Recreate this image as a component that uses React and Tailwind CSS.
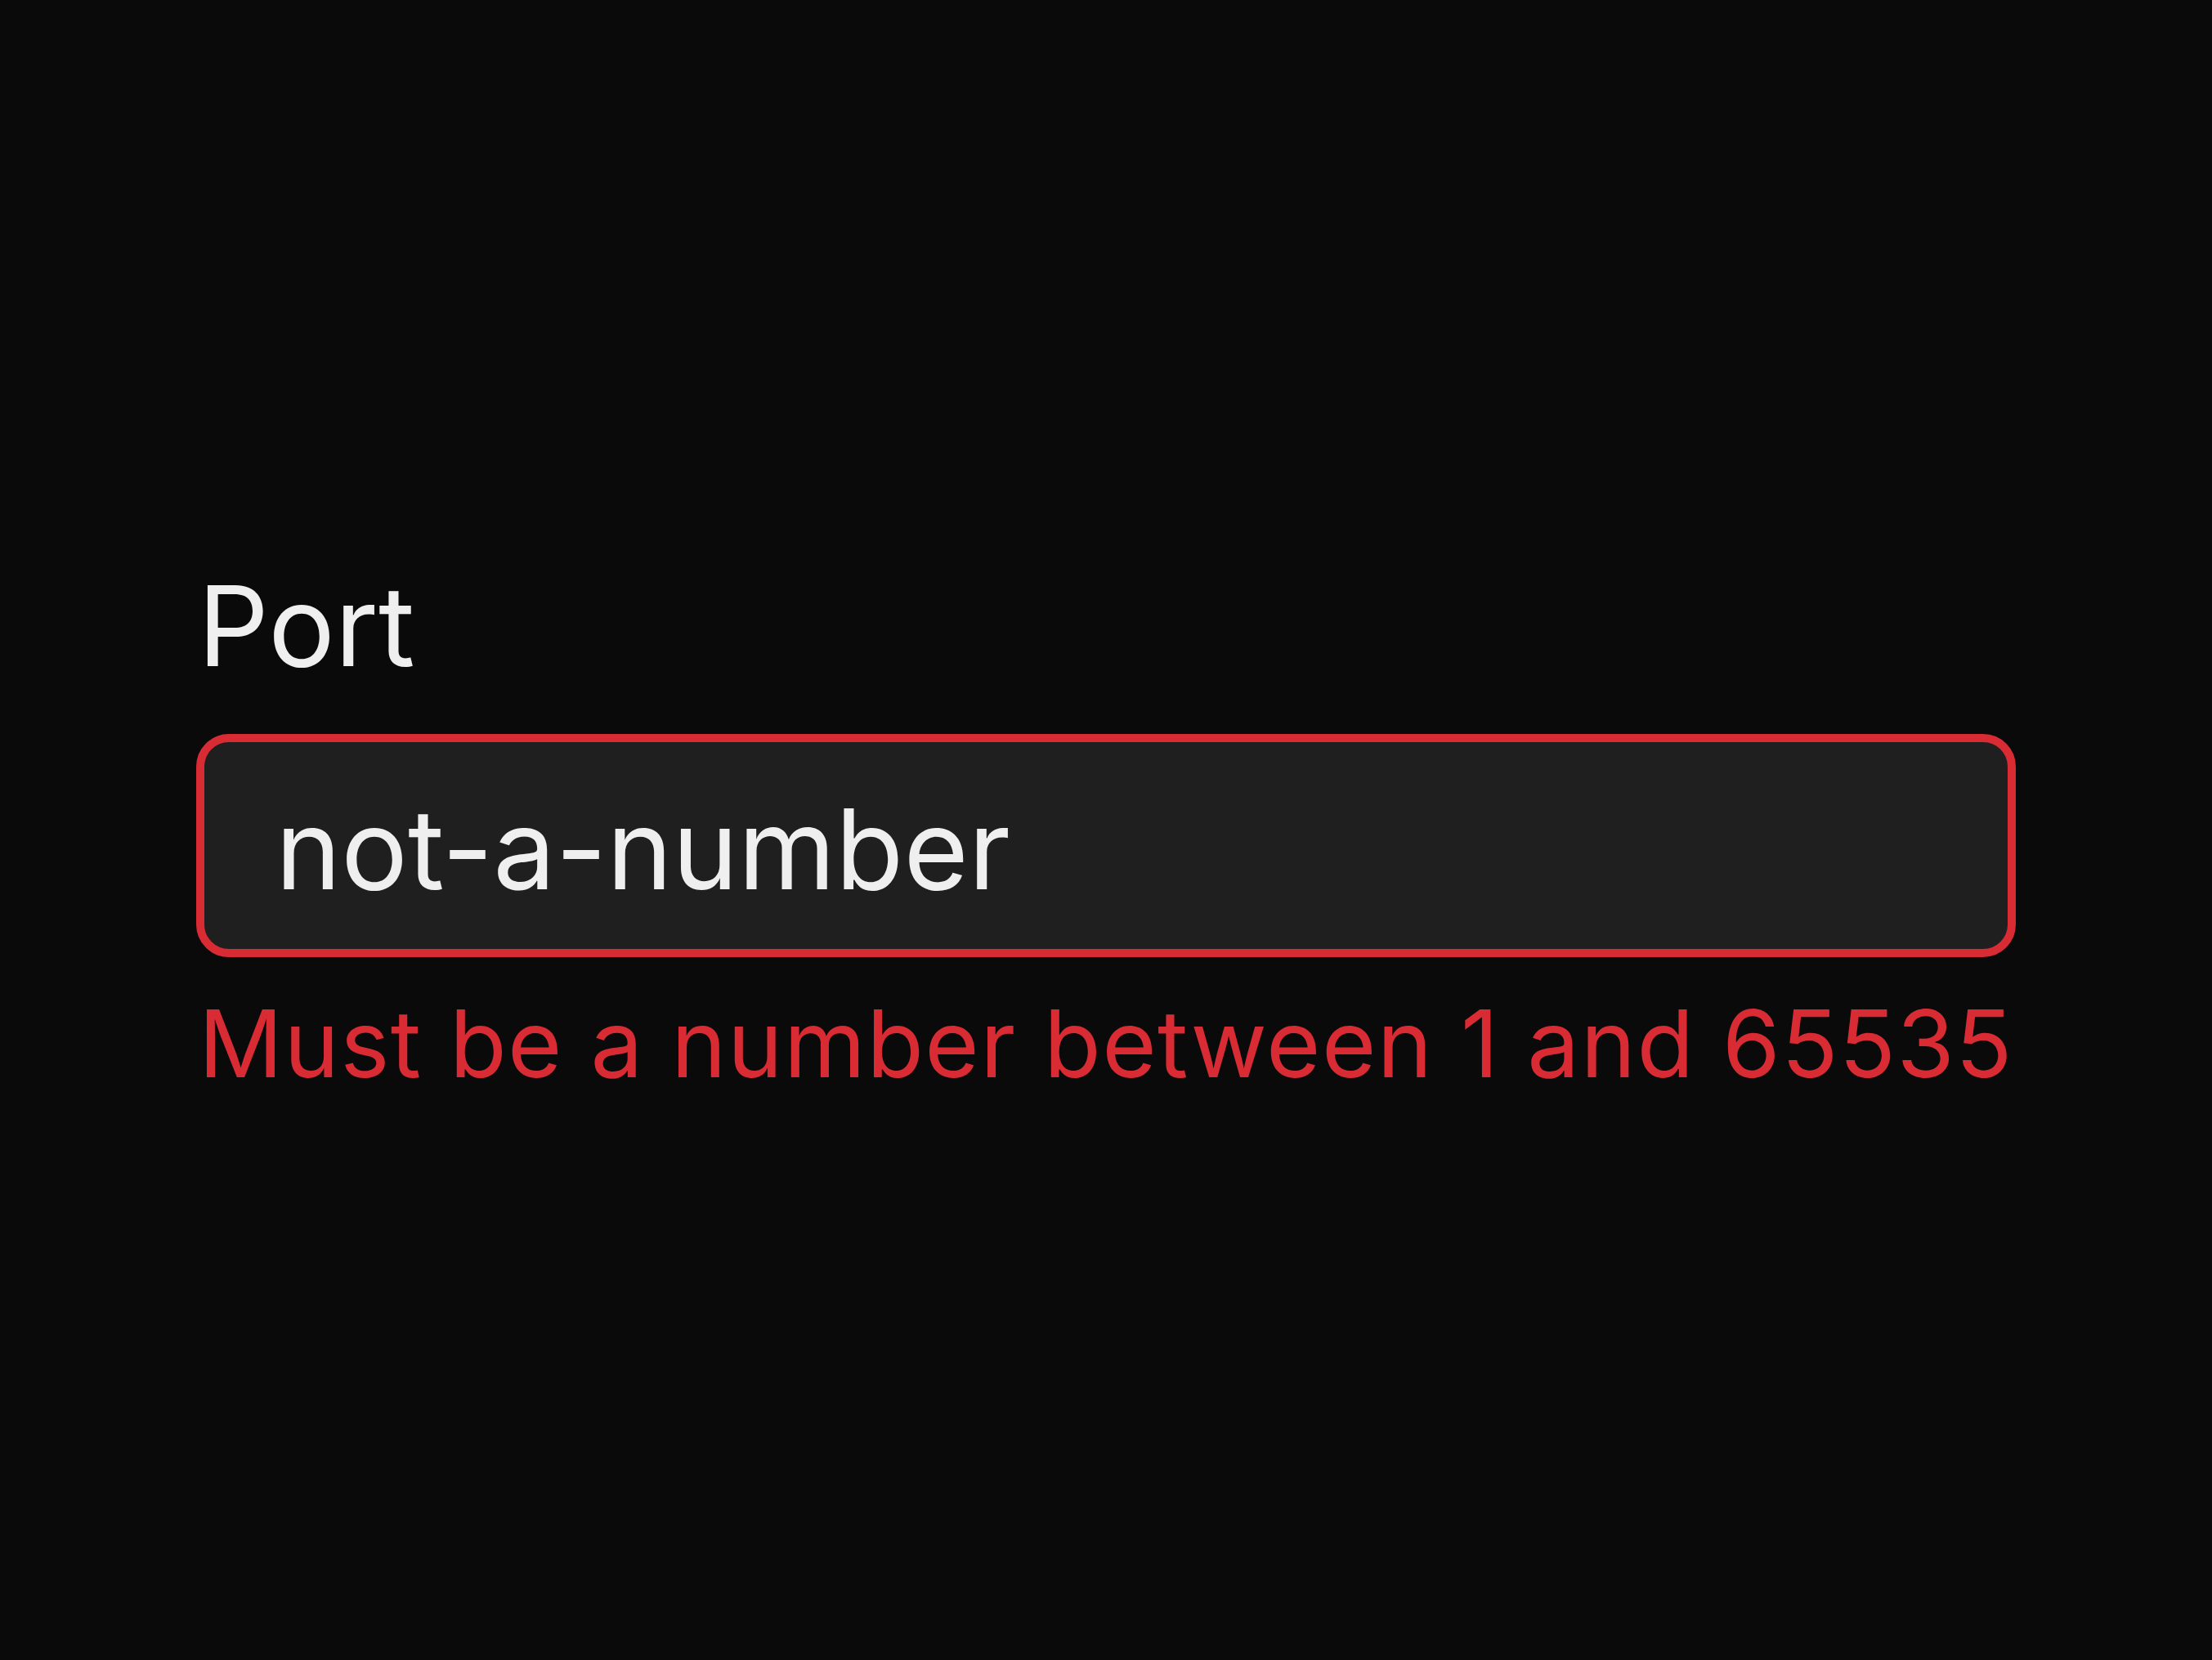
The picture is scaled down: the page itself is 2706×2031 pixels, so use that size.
export default function App() {
  return (
    <div className="min-h-screen w-full bg-[#0a0a0a] pl-[240px] pr-[240px] pt-[698px]" style={{ fontFamily: 'Inter, "Noto Sans", sans-serif' }}>
      <div className="w-[2226px]">
        <label className="block pl-[2px] text-[136px] leading-none text-[#efefef]">Port</label>
        <div className="mt-[64px] flex h-[273px] items-center rounded-[40px] border-[10px] border-[#d92b34] bg-[#1f1f1f] pl-[87px] pt-[8px]">
          <span className="text-[136px] leading-none text-[#efefef]">not-a-number</span>
        </div>
        <p className="mt-[49px] whitespace-nowrap pl-[3px] text-[114px] leading-none tracking-[1.4px] text-[#d92b34]">Must be a number between 1 and 65535</p>
      </div>
    </div>
  );
}
